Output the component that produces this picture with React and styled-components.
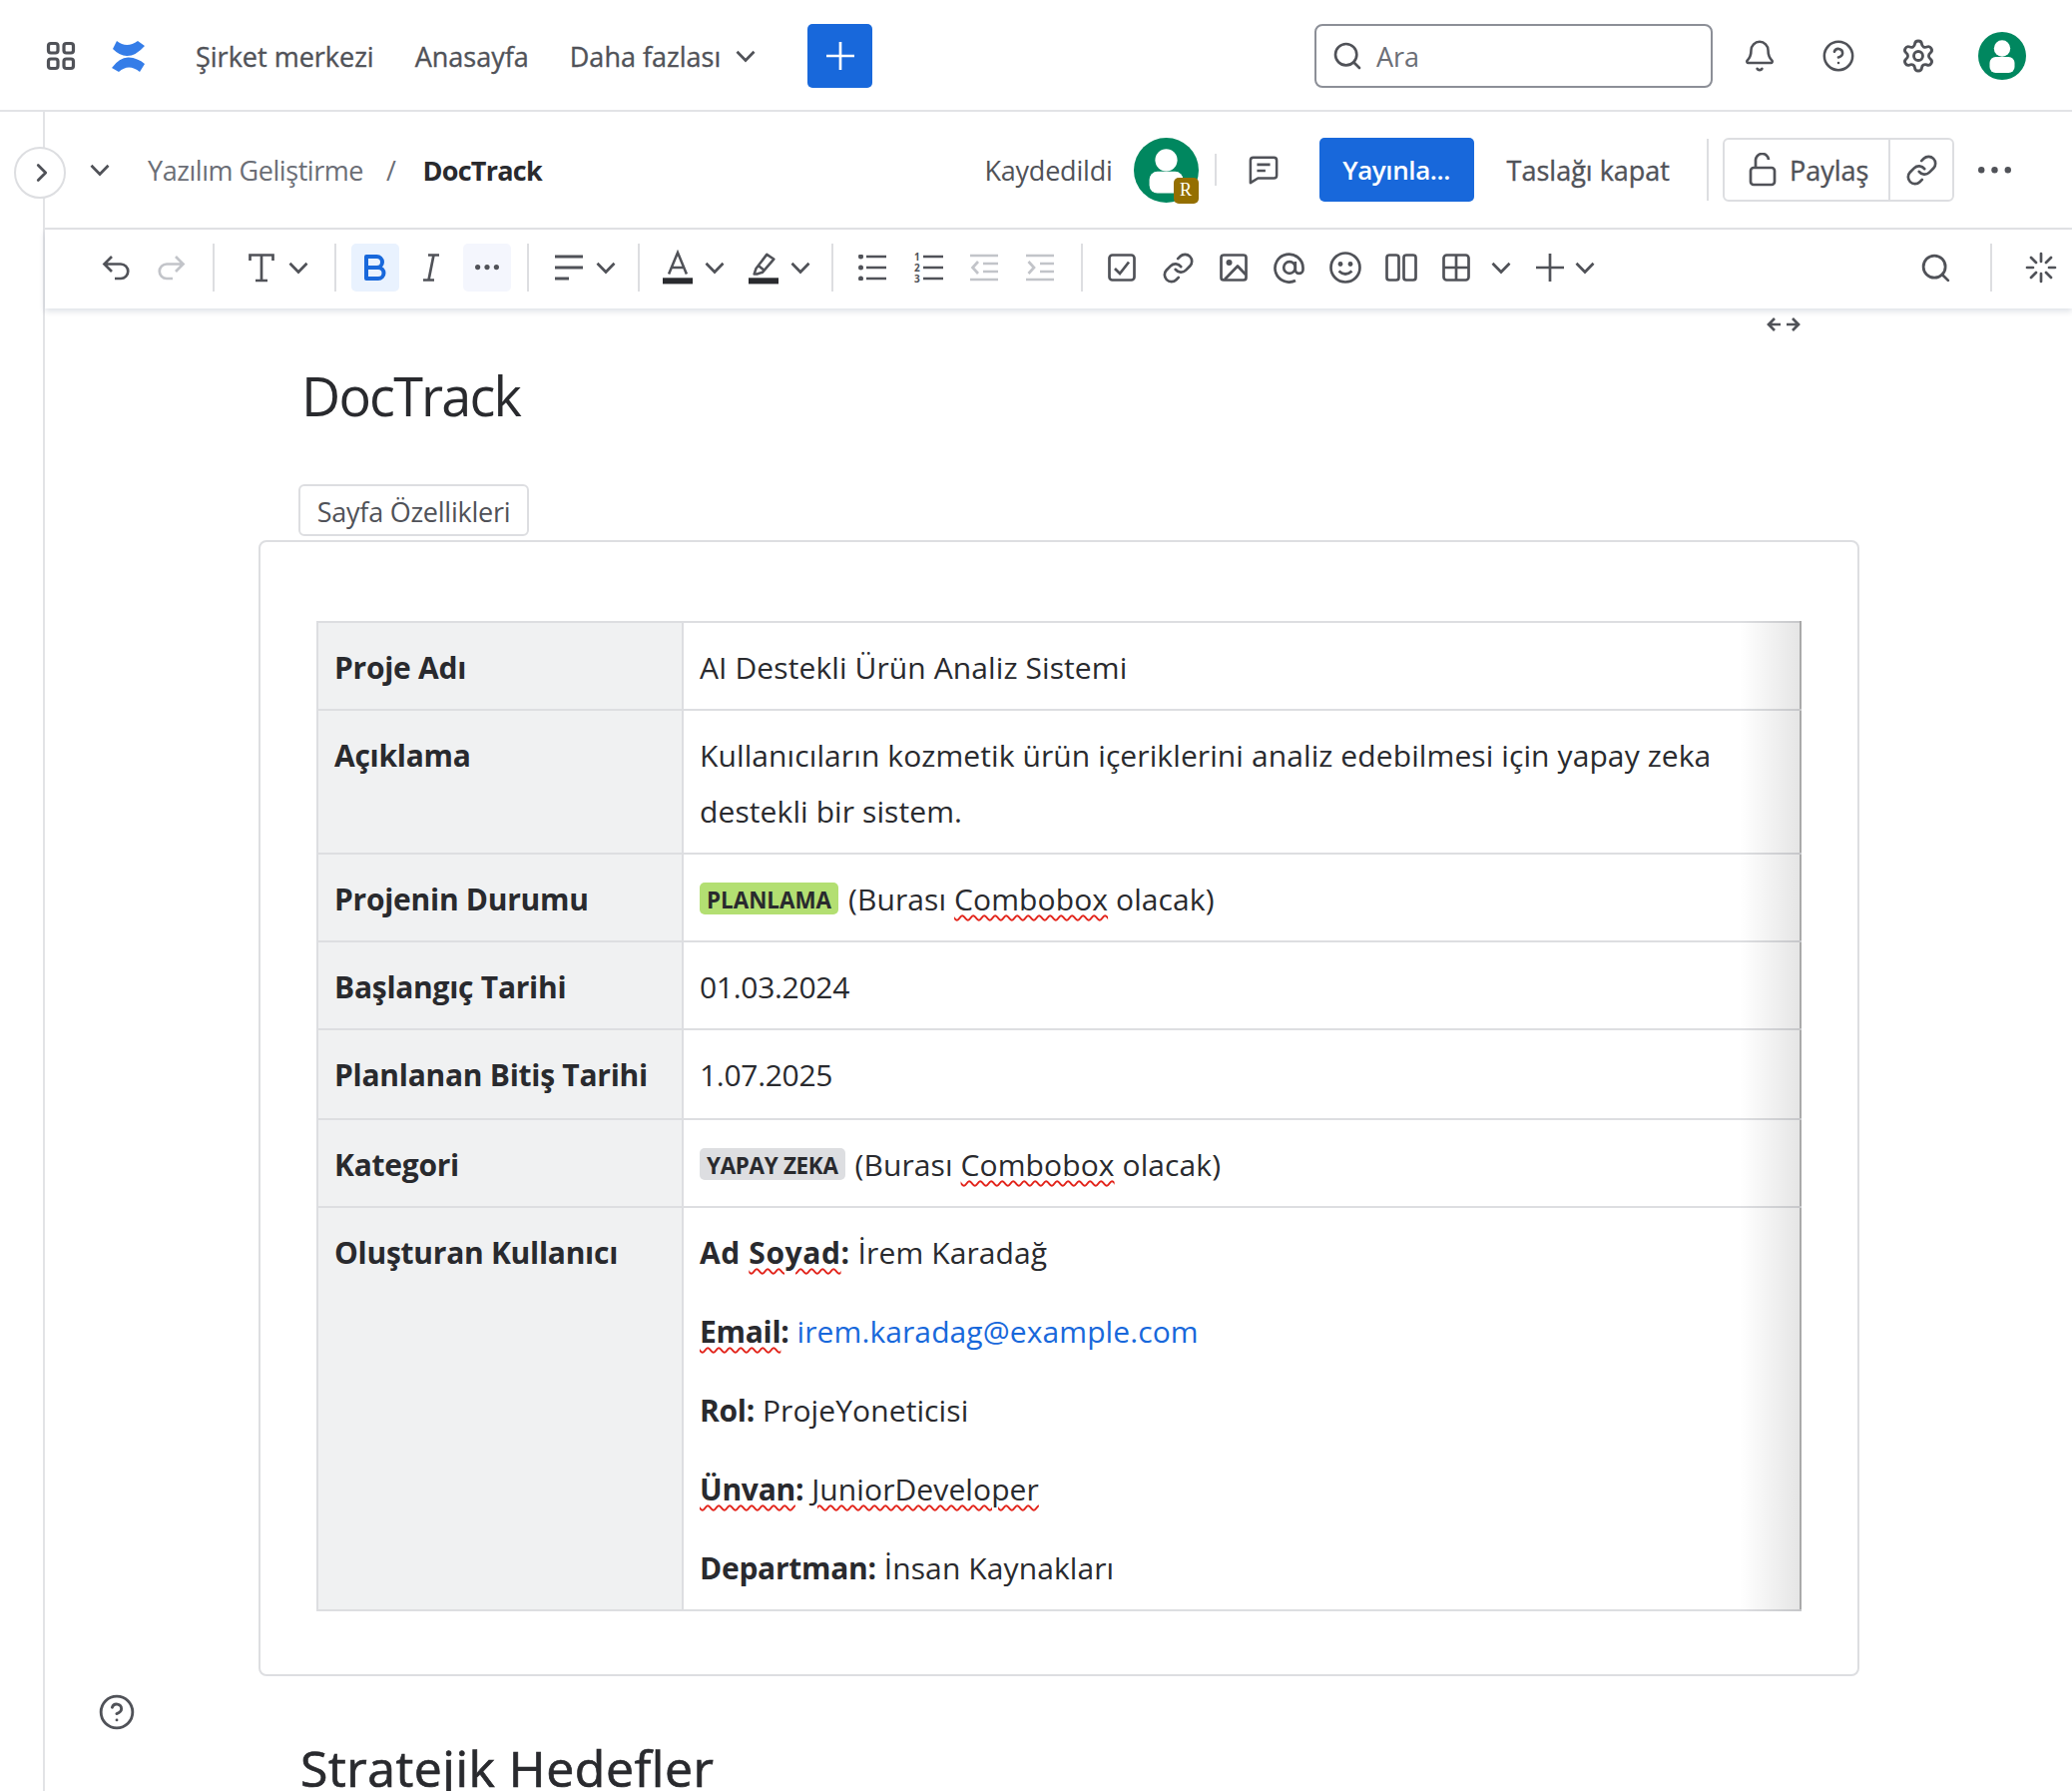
import React from "react";
import styled, { createGlobalStyle } from "styled-components";
import { Search, ChevronRight, Bell, CircleHelp, Settings, Link as LinkIcon } from "lucide-react";

const FONT = `"Open Sans", "Noto Sans", "Liberation Sans", sans-serif`;
const INK = "#292a2e";
const ICON = "#505258";

const Global = createGlobalStyle`
  html, body { margin: 0; padding: 0; background: #fff; }
  body { font-family: ${FONT}; color: ${INK}; height: 1794px; overflow: hidden; }
  * { box-sizing: border-box; }
`;

const Page = styled.div`width: 2076px; height: 1794px; overflow: hidden; display: flex; flex-direction: column;`;

const TopBar = styled.header`
  height: 112px; flex: none; display: flex; align-items: center; padding: 2px 46px 0; border-bottom: 2px solid #e2e3e6;
`;
const IconSlot = styled.span`
  display: inline-flex; align-items: center; justify-content: center; flex: none; color: ${p => p.$color || ICON};
  width: ${p => p.$w || 30}px; height: ${p => p.$h || 32}px; margin-left: ${p => p.$ml || 0}px; margin-right: ${p => p.$mr || 0}px;
`;
const NavItem = styled.span`
  font-size: 27px; font-weight: 500; -webkit-text-stroke: 0.35px currentColor; color: ${ICON}; margin-left: ${p => p.$ml || 0}px; white-space: nowrap;
`;
const PlusButton = styled.button`
  width: 65px; height: 64px; border: 0; border-radius: 5px; background: #1868db; color: #fff; margin-left: 52px;
  display: flex; align-items: center; justify-content: center; padding: 0;
`;
const SearchBox = styled.div`
  width: 399px; height: 64px; margin-left: auto; border: 2px solid #8c8f97; border-radius: 8px; display: flex; align-items: center; padding-left: 15px;
  color: ${ICON};
`;
const SearchHint = styled.span`font-size: 27px; color: #6b6e76; margin-left: 13px;`;

const Workspace = styled.div`flex: 1; display: flex; position: relative; min-height: 0;`;
const Rail = styled.aside`width: 45px; flex: none; border-right: 2px solid #e2e3e6;`;
const RailToggle = styled.button`
  position: absolute; left: 14px; top: 35px; width: 52px; height: 52px; border-radius: 50%; background: #fff; border: 2px solid #dddee1;
  display: flex; align-items: center; justify-content: center; padding: 0 0 0 3px; color: ${ICON};
`;
const FloatingHelp = styled.span`
  position: absolute; left: 98px; top: 1584px; color: ${ICON}; display: flex;
`;
const Main = styled.main`flex: 1; min-width: 0; display: flex; flex-direction: column;`;

const Header = styled.div`
  height: 118px; flex: none; border-bottom: 2px solid #e2e3e6; display: flex; align-items: center; padding: 0 0 0 40px;
`;
const Crumb = styled.span`
  font-size: 27px; letter-spacing: ${p => (p.$strong ? "-0.75px" : "-0.45px")}; white-space: nowrap; margin-left: ${p => p.$ml || 0}px;
  color: ${p => (p.$strong ? INK : "#6b6e76")}; font-weight: ${p => (p.$strong ? 700 : 400)};
`;
const HeaderRight = styled.div`margin-left: auto; display: flex; align-items: center; padding-right: 61px;`;
const Saved = styled.span`font-size: 27px; color: ${ICON}; letter-spacing: -0.2px;`;
const AvatarWrap = styled.span`position: relative; display: flex; margin-left: 21px; width: 65px; height: 65px;`;
const RoleBadge = styled.span`
  position: absolute; right: 0; bottom: -1px; width: 25px; height: 26px; border-radius: 5px; background: #946f00; color: #fff;
  font: 18px "Liberation Serif", serif; display: flex; align-items: center; justify-content: center;
`;
const VRule = styled.span`
  width: 2px; flex: none; height: ${p => p.$h || 48}px; background: #dddee1; margin-left: ${p => p.$l || 0}px; margin-right: ${p => p.$r || 0}px;
`;
const Publish = styled.button`
  width: 155px; height: 64px; border: 0; border-radius: 5px; background: #1868db; color: #fff; font: 600 26px ${FONT}; letter-spacing: -0.4px; margin-left: 41px; padding: 0;
`;
const Ghost = styled.span`font-size: 27px; font-weight: 500; -webkit-text-stroke: 0.35px currentColor; color: ${ICON}; margin-left: 33px; white-space: nowrap;`;
const ShareGroup = styled.div`
  width: 232px; height: 64px; border: 2px solid #dddee1; border-radius: 6px; display: flex; align-items: stretch; margin-left: 14px;
`;
const ShareMain = styled.div`
  flex: 1; display: flex; align-items: center; padding-left: 24px; gap: 13px; border-right: 2px solid #dddee1;
  font-size: 27px; font-weight: 500; -webkit-text-stroke: 0.35px currentColor; color: ${ICON};
`;
const ShareLink = styled.div`width: 62px; display: flex; align-items: center; justify-content: center; color: ${ICON};`;

const Toolbar = styled.div`
  height: 79px; flex: none; display: flex; align-items: center; padding: 0 7px 3px 47px; background: #fff;
  box-shadow: 0 3px 6px rgba(9, 30, 66, 0.13); position: relative; z-index: 2;
`;
const ToolGroup = styled.div`display: flex; align-items: center; gap: 8px;`;
const ToolButton = styled.button`
  width: 48px; height: 48px; border: 0; border-radius: 5px; padding: 0; display: flex; align-items: center; justify-content: center;
  background: ${p => p.$bg || "transparent"}; color: ${p => p.$color || ICON};
`;
const Dropdown = styled.button`
  height: 48px; border: 0; background: transparent; padding: 0 8px; display: flex; align-items: center; gap: ${p => p.$gap || 12}px; color: ${ICON};
`;
const Spacer = styled.span`flex: 1;`;

const Content = styled.div`flex: 1; position: relative; min-height: 0; padding: 0 0 0 214px;`;
const WidthToggle = styled.span`position: absolute; left: 1725px; top: 7px; color: ${ICON}; display: flex;`;
const Title = styled.h1`
  margin: 0 0 0 43px; padding-top: 49px; font-size: 54px; line-height: 76px; font-weight: 400; color: ${INK}; letter-spacing: -1.8px;
`;
const TabLabel = styled.div`
  width: 231px; height: 52px; margin: 51px 0 4px 40px; border: 2px solid #dddee1; border-radius: 6px; display: flex; align-items: center; justify-content: center;
  font-size: 27px; color: ${ICON}; letter-spacing: -0.25px; padding-top: 2px; white-space: nowrap;
`;
const Panel = styled.section`
  width: 1604px; height: 1138px; border: 2px solid #dddee1; border-radius: 8px; padding: 79px 56px 0 56px;
`;
const TableWrap = styled.div`position: relative; width: 1488px;
  &::after { content: ""; position: absolute; top: 0; right: 0; bottom: 0; width: 62px; pointer-events: none;
    background: linear-gradient(to right, rgba(0,0,0,0), rgba(0,0,0,0.105)); }
`;
const Table = styled.table`
  width: 100%; border-collapse: collapse; table-layout: fixed; border: 2px solid #dddee1; border-right-color: #bdbdbd;
  line-height: 56px;
`;
const Row = styled.tr`height: ${p => p.$h}px;`;
const HeadCell = styled.th`
  background: #f0f1f2; border: 2px solid #dddee1; text-align: left; vertical-align: top; padding: 17px 16px 13px;
  font-size: 30px; font-weight: 700; letter-spacing: -0.27px; color: ${INK}; white-space: nowrap;
`;
const BodyCell = styled.td`
  border: 2px solid #dddee1; border-right-color: #bdbdbd; vertical-align: top; padding: 17px 16px 13px; font-size: 30px;
  letter-spacing: ${p => (p.$tight ? "-0.3px" : "0.1px")}; color: ${INK};
  strong { letter-spacing: -0.27px; }
`;
const WideLabel = styled.strong`&& { letter-spacing: 0.6px; }`;
const Lozenge = styled.span`
  display: inline-block; height: 32px; line-height: 35px; vertical-align: 2px; padding: 0 7px; border-radius: 5px; background: ${p => p.$bg};
  font-size: 22.4px; font-weight: 700; letter-spacing: ${p => p.$track || 0}px; color: ${INK}; margin-right: ${p => p.$mr}px; text-transform: uppercase; white-space: nowrap;
`;
const Typo = styled.span`
  text-decoration: underline wavy #e2231a; text-decoration-thickness: 2.4px; text-underline-offset: 4px;
`;
const Para = styled.p`margin: 0 0 23px; &:last-child { margin-bottom: 0; }`;
const MailLink = styled.a`color: #1868db; text-decoration: none;`;
const Subhead = styled.h2`
  margin: 62px 0 0 42px; font-size: 50px; line-height: 60px; font-weight: 500; -webkit-text-stroke: 0.7px currentColor; color: ${INK}; letter-spacing: 0.5px; white-space: nowrap;
`;

const S = { fill: "none", stroke: "currentColor", strokeWidth: 2.7 };

const Dots = ({ w = 24, r = 2.6 }) => (
  <svg width={w} height={2 * r + 2} viewBox={`0 0 ${w} ${2 * r + 2}`} fill="currentColor">
    <circle cx={r} cy={r + 1} r={r} /><circle cx={w / 2} cy={r + 1} r={r} /><circle cx={w - r} cy={r + 1} r={r} />
  </svg>
);
const Chev = () => (
  <svg width="20" height="13" viewBox="0 0 20 13" {...S}><path d="M1.5 1.8 L10 10.5 L18.5 1.8" /></svg>
);
const PlusIcon = ({ size = 28, width = 2.7 }) => (
  <svg width={size} height={size} viewBox="0 0 28 28" fill="none" stroke="currentColor" strokeWidth={width}><path d="M14 0 V28 M0 14 H28" /></svg>
);
const AppGrid = () => (
  <svg width="30" height="30" viewBox="0 0 30 30" fill="none" stroke={ICON} strokeWidth="3.2">
    <rect x="2.5" y="2.5" width="9.5" height="9.5" rx="2.5" /><rect x="18" y="2.5" width="9.5" height="9.5" rx="2.5" /><rect x="2.5" y="18" width="9.5" height="9.5" rx="2.5" /><rect x="18" y="18" width="9.5" height="9.5" rx="2.5" />
  </svg>
);
const Logo = () => (
  <svg width="34" height="33" viewBox="0 0 34 33" fill="#357de8">
    <path d="M5 1 Q15 9 26 1 L33 6 Q24 16.2 15 16 Q8 16 1 9 Z" />
    <path d="M0 28 Q8 17 17 17.5 Q26 18 33 24 L28 32 Q17 23 7 32 Z" />
  </svg>
);
const AvatarIcon = ({ size }) => (
  <svg width={size} height={size} viewBox="0 0 48 48">
    <circle cx="24" cy="24" r="24" fill="#00875f" />
    <circle cx="24" cy="16.5" r="8.2" fill="#fff" />
    <rect x="11.5" y="25" width="25" height="16" rx="6" fill="#fff" />
  </svg>
);
const CommentIcon = () => (
  <svg width="32" height="31" viewBox="0 0 32 31" {...S} strokeLinejoin="round">
    <path d="M2 5 A3 3 0 0 1 5 2 H27 A3 3 0 0 1 30 5 V21 A3 3 0 0 1 27 24 H10 L2 29 Z" />
    <path d="M9 9.5 H23 M9 16 H18" />
  </svg>
);
const LockOpen = () => (
  <svg width="28" height="34" viewBox="0 0 28 34" {...S}>
    <rect x="2" y="15" width="24" height="17" rx="3" />
    <path d="M7 15 V8 A6.5 6.5 0 0 1 20 7" />
  </svg>
);
const Chain = () => <LinkIcon size={33} strokeWidth={1.95} />;
const Undo = () => (
  <svg width="28" height="26" viewBox="0 0 28 26" {...S}><path d="M10 2 L2.5 9.5 L10 17 M2.5 9.5 H19 A7 7 0 0 1 19 24 H13" /></svg>
);
const Redo = () => (
  <svg width="28" height="26" viewBox="0 0 28 26" {...S}><path d="M18 2 L25.5 9.5 L18 17 M25.5 9.5 H9 A7 7 0 0 0 9 24 H15" /></svg>
);
const SerifT = () => (
  <svg width="26" height="30" viewBox="0 0 26 30" {...S}><path d="M1.5 8 V2.5 H24.5 V8 M13 2.5 V28 M7 28 H19" /></svg>
);
const BoldB = () => (
  <svg width="24" height="28" viewBox="0 0 24 28" fill="none" stroke="currentColor" strokeWidth="4" strokeLinejoin="round">
    <path d="M3 3 H13.5 A5.5 5.5 0 0 1 13.5 14 H3 Z M3 14 H15 A5.5 5.5 0 0 1 15 25 H3 Z" />
  </svg>
);
const ItalicI = () => (
  <svg width="18" height="30" viewBox="0 0 18 30" {...S}><path d="M6 2.5 H17 M1 27.5 H12 M11.5 2.5 L6.5 27.5" /></svg>
);
const AlignIcon = () => (
  <svg width="28" height="26" viewBox="0 0 28 26" {...S} strokeWidth="3"><path d="M0 2 H28 M0 13 H28 M0 24 H14" /></svg>
);
const ColorA = () => (
  <svg width="32" height="36" viewBox="0 0 32 36" fill="none"><path d="M6.5 25 L16 2 L25.5 25 M9.5 18 H22.5" stroke={ICON} strokeWidth="2.7" /><rect x="0" y="29" width="32" height="6.5" fill="#292a2e" /></svg>
);
const Highlight = () => (
  <svg width="32" height="36" viewBox="0 0 32 36" fill="none"><path d="M6 25 L8 19 L19.5 4 L27 9 L15 23 L9 25 Z M10 15.5 L17.5 21.5" stroke={ICON} strokeWidth="2.7" strokeLinejoin="round" /><rect x="0" y="29" width="32" height="6.5" fill="#292a2e" /></svg>
);
const Bullets = () => (
  <svg width="28" height="26" viewBox="0 0 28 26" fill="none" stroke="currentColor" strokeWidth="2.7">
    <path d="M8 2 H28 M8 13 H28 M8 24 H28" /><g fill="currentColor" stroke="none"><circle cx="2.5" cy="2" r="2.5" /><circle cx="2.5" cy="13" r="2.5" /><circle cx="2.5" cy="24" r="2.5" /></g>
  </svg>
);
const Numbered = () => (
  <svg width="30" height="30" viewBox="0 0 30 30" fill="none" style={{ overflow: "visible" }}>
    <path d="M10 4 H30 M10 15 H30 M10 26 H30" stroke="currentColor" strokeWidth="2.7" />
    <g fill="currentColor" fontFamily="Open Sans, sans-serif" fontWeight="700" fontSize="10"><text x="1" y="8">1</text><text x="1" y="19">2</text><text x="1" y="30">3</text></g>
  </svg>
);
const Outdent = () => (
  <svg width="28" height="28" viewBox="0 0 28 28" {...S}><path d="M0 2 H28 M0 26 H28 M13 10 H28 M13 18 H28 M8 8 L2.5 14 L8 20" /></svg>
);
const Indent = () => (
  <svg width="28" height="28" viewBox="0 0 28 28" {...S}><path d="M0 2 H28 M0 26 H28 M14 10 H28 M14 18 H28 M2.5 8 L8 14 L2.5 20" /></svg>
);
const CheckBox = () => (
  <svg width="28" height="28" viewBox="0 0 28 28" {...S}><rect x="1.5" y="1.5" width="25" height="25" rx="3" /><path d="M7 15 L12 20 L21 8.5" /></svg>
);
const ImageBox = () => (
  <svg width="28" height="28" viewBox="0 0 28 28" {...S} strokeLinejoin="round">
    <rect x="1.5" y="1.5" width="25" height="25" rx="2.5" /><circle cx="9.5" cy="9" r="3" fill="currentColor" stroke="none" /><path d="M5 26 L18 12.5 L26 21" />
  </svg>
);
const At = () => (
  <svg width="32" height="32" viewBox="0 0 32 32" {...S}>
    <circle cx="16" cy="16" r="5.8" /><path d="M21.8 10 V18 A3.8 3.8 0 0 0 29.5 18 V16 A14 14 0 1 0 22 29" />
  </svg>
);
const Smiley = () => (
  <svg width="32" height="32" viewBox="0 0 32 32" {...S}>
    <circle cx="16" cy="16" r="14.5" /><circle cx="11" cy="12.5" r="2.4" fill="currentColor" stroke="none" /><circle cx="21" cy="12.5" r="2.4" fill="currentColor" stroke="none" /><path d="M9.5 19.5 Q16 25.5 22.5 19.5" />
  </svg>
);
const Columns = () => (
  <svg width="32" height="28" viewBox="0 0 32 28" {...S}><rect x="1.5" y="1.5" width="12" height="25" rx="2.5" /><rect x="18.5" y="1.5" width="12" height="25" rx="2.5" /></svg>
);
const TableIcon = () => (
  <svg width="28" height="28" viewBox="0 0 28 28" {...S}><rect x="1.5" y="1.5" width="25" height="25" rx="3" /><path d="M14 1.5 V26.5 M1.5 14 H26.5" /></svg>
);
const SparkIcon = () => (
  <svg width="32" height="32" viewBox="0 0 32 32" {...S} strokeLinecap="round">
    <path d="M16 2 V10 M16 22 V30 M2 16 H8 M24 16 H30 M6 6 L11 11 M26 6 L21 11 M6 26 L11 21 M26 26 L21 21" />
  </svg>
);
const WidthIcon = () => (
  <svg width="34" height="18" viewBox="0 0 34 18" {...S}><path d="M8 3 L2 9 L8 15 M2 9 H14 M26 3 L32 9 L26 15 M32 9 H20" /></svg>
);

const muted = "#c2c4c9";

export default function App() {
  return (
    <Page>
      <Global />
      <TopBar>
        <AppGrid />
        <IconSlot $w={34} $h={34} $ml={36}><Logo /></IconSlot>
        <NavItem $ml={50}>Şirket merkezi</NavItem>
        <NavItem $ml={41}>Anasayfa</NavItem>
        <NavItem $ml={41}>Daha fazlası</NavItem>
        <IconSlot $w={20} $ml={15}><Chev /></IconSlot>
        <PlusButton><PlusIcon size={28} /></PlusButton>
        <SearchBox><Search size={32} strokeWidth={2} /><SearchHint>Ara</SearchHint></SearchBox>
        <IconSlot $w={34} $h={36} $ml={30}><Bell size={36} strokeWidth={1.8} /></IconSlot>
        <IconSlot $w={34} $h={38} $ml={45}><CircleHelp size={38} strokeWidth={1.8} /></IconSlot>
        <IconSlot $w={36} $h={36} $ml={45}><Settings size={36} strokeWidth={1.9} /></IconSlot>
        <IconSlot $w={48} $h={48} $ml={42}><AvatarIcon size={48} /></IconSlot>
      </TopBar>
      <Workspace>
        <Rail />
        <RailToggle><ChevronRight size={30} strokeWidth={2.2} /></RailToggle>
        <FloatingHelp><CircleHelp size={38} strokeWidth={1.8} /></FloatingHelp>
        <Main>
          <Header>
            <IconSlot $w={30}><Chev /></IconSlot>
            <Crumb $ml={33}>Yazılım Geliştirme</Crumb>
            <Crumb $ml={23}>/</Crumb>
            <Crumb $ml={27} $strong>DocTrack</Crumb>
            <HeaderRight>
              <Saved>Kaydedildi</Saved>
              <AvatarWrap><AvatarIcon size={65} /><RoleBadge>R</RoleBadge></AvatarWrap>
              <VRule $h={32} $l={16} $r={32} />
              <IconSlot $color={ICON}><CommentIcon /></IconSlot>
              <Publish>Yayınla...</Publish>
              <Ghost>Taslağı kapat</Ghost>
              <VRule $h={62} $l={37} />
              <ShareGroup>
                <ShareMain><LockOpen />Paylaş</ShareMain>
                <ShareLink><Chain /></ShareLink>
              </ShareGroup>
              <IconSlot $w={33} $ml={24} $color={ICON}><Dots w={33} r={3.2} /></IconSlot>
            </HeaderRight>
          </Header>
          <Toolbar>
            <ToolGroup>
              <ToolButton><Undo /></ToolButton>
              <ToolButton $color={muted}><Redo /></ToolButton>
            </ToolGroup>
            <VRule $l={17} $r={24} />
            <Dropdown><IconSlot><SerifT /></IconSlot><Chev /></Dropdown>
            <VRule $l={18} $r={15} />
            <ToolGroup>
              <ToolButton $bg="#e9f2fe" $color="#1868db"><BoldB /></ToolButton>
              <ToolButton><ItalicI /></ToolButton>
              <ToolButton $bg="#f4f6fd"><Dots /></ToolButton>
            </ToolGroup>
            <VRule $l={16} $r={17} />
            <Dropdown><IconSlot><AlignIcon /></IconSlot><Chev /></Dropdown>
            <VRule $l={14} $r={15} />
            <ToolGroup>
              <Dropdown><IconSlot $h={36}><ColorA /></IconSlot><Chev /></Dropdown>
              <Dropdown><IconSlot $h={36}><Highlight /></IconSlot><Chev /></Dropdown>
            </ToolGroup>
            <VRule $l={13} $r={15} />
            <ToolGroup>
              <ToolButton><Bullets /></ToolButton>
              <ToolButton><Numbered /></ToolButton>
              <ToolButton $color={muted}><Outdent /></ToolButton>
              <ToolButton $color={muted}><Indent /></ToolButton>
            </ToolGroup>
            <VRule $l={17} $r={15} />
            <ToolGroup>
              <ToolButton><CheckBox /></ToolButton>
              <ToolButton><Chain /></ToolButton>
              <ToolButton><ImageBox /></ToolButton>
              <ToolButton><At /></ToolButton>
              <ToolButton><Smiley /></ToolButton>
              <ToolButton><Columns /></ToolButton>
              <Dropdown $gap={20}><IconSlot><TableIcon /></IconSlot><Chev /></Dropdown>
              <Dropdown $gap={10}><IconSlot><PlusIcon /></IconSlot><Chev /></Dropdown>
            </ToolGroup>
            <Spacer />
            <ToolButton><Search size={33} strokeWidth={2} /></ToolButton>
            <VRule $l={31} $r={25} />
            <ToolButton><SparkIcon /></ToolButton>
          </Toolbar>
          <Content>
            <WidthToggle><WidthIcon /></WidthToggle>
            <Title>DocTrack</Title>
            <TabLabel>Sayfa Özellikleri</TabLabel>
            <Panel>
              <TableWrap>
                <Table>
                  <colgroup><col style={{ width: 366 }} /><col /></colgroup>
                  <tbody>
                    <Row $h={88}><HeadCell>Proje Adı</HeadCell><BodyCell>AI Destekli Ürün Analiz Sistemi</BodyCell></Row>
                    <Row $h={144}><HeadCell>Açıklama</HeadCell><BodyCell>Kullanıcıların kozmetik ürün içeriklerini analiz edebilmesi için yapay zeka destekli bir sistem.</BodyCell></Row>
                    <Row $h={87}><HeadCell>Projenin Durumu</HeadCell><BodyCell><Lozenge $bg="#b3df72" $mr={10}>Planlama</Lozenge>(Burası <Typo>Combobox</Typo> olacak)</BodyCell></Row>
                    <Row $h={88}><HeadCell>Başlangıç Tarihi</HeadCell><BodyCell $tight>01.03.2024</BodyCell></Row>
                    <Row $h={90}><HeadCell>Planlanan Bitiş Tarihi</HeadCell><BodyCell $tight>1.07.2025</BodyCell></Row>
                    <Row $h={88}><HeadCell>Kategori</HeadCell><BodyCell><Lozenge $bg="#dddee1" $mr={10} $track={-0.3}>Yapay Zeka</Lozenge>(Burası <Typo>Combobox</Typo> olacak)</BodyCell></Row>
                    <Row $h={402}><HeadCell>Oluşturan Kullanıcı</HeadCell><BodyCell>
                      <Para><WideLabel>Ad <Typo>Soyad</Typo>:</WideLabel> İrem Karadağ</Para>
                      <Para><strong><Typo>Email</Typo>:</strong> <MailLink>irem.karadag@example.com</MailLink></Para>
                      <Para><strong>Rol:</strong> ProjeYoneticisi</Para>
                      <Para><strong><Typo>Ünvan</Typo>:</strong> <Typo>JuniorDeveloper</Typo></Para>
                      <Para><strong>Departman:</strong> İnsan Kaynakları</Para>
                    </BodyCell></Row>
                  </tbody>
                </Table>
              </TableWrap>
            </Panel>
            <Subhead>Stratejik Hedefler</Subhead>
          </Content>
        </Main>
      </Workspace>
    </Page>
  );
}
